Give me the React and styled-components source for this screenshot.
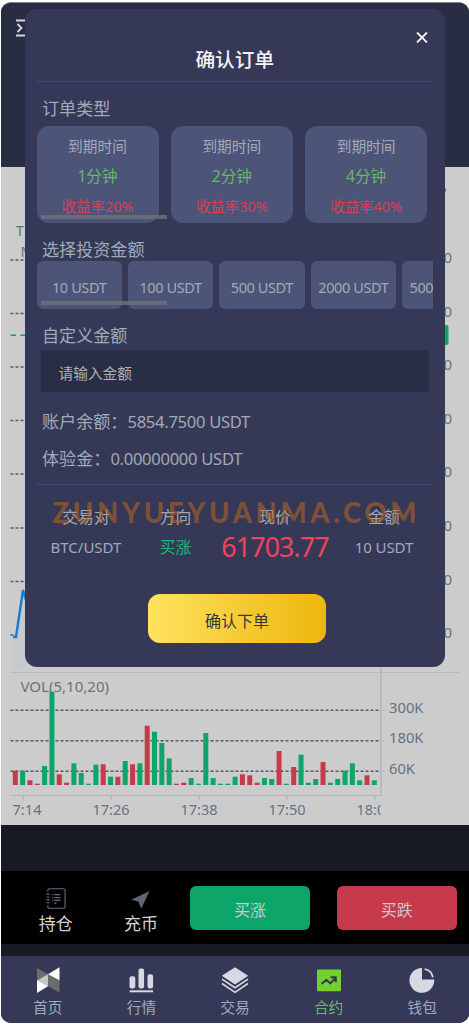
import React from 'react';
import styled, { createGlobalStyle } from 'styled-components';

const GlobalStyle = createGlobalStyle`
  *, *::before, *::after { box-sizing: border-box; }
  body {
    margin: 0;
    background: #fff;
    font-family: "Noto Sans", "Noto Sans CJK SC", sans-serif;
    font-weight: 400;
    -webkit-font-smoothing: antialiased;
  }
`;

const Page = styled.div`
  width: 469px;
  height: 1024px;
  padding: 2px 0 1px 1px;
  background: #fff;
  overflow: hidden;
`;

const Screen = styled.main`
  position: relative;
  display: flex;
  flex-direction: column;
  height: 1021px;
  border-radius: 10px;
  border-top: 1px solid #7d808d;
  overflow: hidden;
  background: #171923;
`;

const TopBar = styled.header`
  height: 164px;
  flex: none;
  padding: 15px 0 0 15px;
  background: #292d43;
`;

const ChartSvg = styled.svg`
  display: block;
  flex: none;
  background: #ccc;
  font-size: 15px;
  fill: #697180;
`;

const ActionBar = styled.section`
  display: flex;
  align-items: center;
  flex: none;
  height: 73px;
  margin-top: 46px;
  padding: 0 12px 0 12px;
  background: #000;
`;

const Shortcut = styled.div`
  display: flex;
  flex-direction: column;
  align-items: center;
  width: 85.5px;
  height: 56px;
  padding-top: 7px;
  color: #d2d4d8;
  font-size: 17px;
  line-height: 25px;
  & > svg { display: block; margin-bottom: 1px; }
`;

const TradeButton = styled.button`
  width: 120.5px;
  height: 44px;
  margin-left: ${(p) => p.$gap}px;
  padding: 4px 0 0;
  border: 0;
  border-radius: 6px;
  background: ${(p) => p.$color};
  color: #c9cbd0;
  font: inherit;
  font-size: 16px;
  line-height: 40px;
`;

const TabBar = styled.nav`
  display: grid;
  grid-template-columns: repeat(5, 1fr);
  flex: none;
  height: 67px;
  margin-top: 12px;
  background: #353957;
`;

const Tab = styled.div`
  display: flex;
  flex-direction: column;
  align-items: center;
  padding-top: 10px;
  color: ${(p) => (p.$active ? '#68b868' : '#a2aabc')};
  font-size: 14.7px;
  line-height: 24px;
  & > svg { display: block; margin-bottom: 1px; }
`;

const Dialog = styled.section`
  position: absolute;
  top: 6px;
  left: 23.5px;
  width: 420.5px;
  height: 658px;
  padding: 15px 12px 0;
  border-radius: 12px;
  background: #353957;
  color: #a2aab8;
`;

const CloseRow = styled.div`
  display: flex;
  justify-content: flex-end;
  height: 24px;
  padding: 8px 5px 0 0;
`;

const Title = styled.h1`
  margin: 0;
  height: 33.5px;
  padding-top: 1px;
  border-bottom: 1px solid #434a70;
  color: #f2f3f5;
  font-size: 19.7px;
  font-weight: 500;
  line-height: 22px;
  text-align: center;
`;

const SectionLabel = styled.h2`
  margin: ${(p) => p.$top}px 0 0 5.5px;
  font-size: 17.1px;
  font-weight: inherit;
  line-height: 26px;
  height: ${(p) => p.$height}px;
`;

const Scroller = styled.div`
  position: relative;
  display: flex;
  gap: ${(p) => p.$gap}px;
  overflow: hidden;
  &::after {
    content: '';
    position: absolute;
    left: 4.5px;
    bottom: 4.5px;
    width: 126px;
    height: 4px;
    background: rgba(113, 112, 118, 0.8);
  }
`;

const TermCard = styled.div`
  flex: none;
  width: 122px;
  height: 97.5px;
  padding-top: 5px;
  border-radius: 12px;
  background: #4c5478;
  font-size: 14.7px;
  line-height: 30.4px;
  text-align: center;
`;

const TermLength = styled.div`
  color: #68b868;
  font-size: 15.6px;
`;

const TermRate = styled.div`
  color: #da3f58;
  letter-spacing: -0.2px;
`;

const AmountChip = styled.div`
  flex: none;
  width: 85.3px;
  height: 48.5px;
  padding-left: ${(p) => p.$pad || 0}px;
  border-radius: 6px;
  background: #4c5478;
  font-size: 14.5px;
  line-height: 53px;
  letter-spacing: -0.4px;
  text-align: ${(p) => (p.$pad ? 'left' : 'center')};
  white-space: nowrap;
`;

const AmountInput = styled.input`
  display: block;
  width: 388.5px;
  height: 42px;
  margin: 3px 0 10.5px 4px;
  padding: 5px 18px 0;
  border: 0;
  background: #292d45;
  font: inherit;
  font-size: 14.7px;
  &::placeholder { color: #b2b2af; opacity: 1; }
`;

const Balance = styled.p`
  margin: 0 0 0 5.5px;
  height: 37px;
  font-size: 16.6px;
  line-height: 39px;
  letter-spacing: -0.3px;
  white-space: nowrap;
`;

const BalanceLabel = styled.span`
  font-size: 17.1px;
  letter-spacing: 0;
`;

const Summary = styled.div`
  position: relative;
  display: grid;
  grid-template-columns: 99px 80px 119px 99px;
  grid-template-rows: 30px 30px;
  margin-top: 8px;
  padding-top: 17px;
  border-top: 1px solid #434a70;
  text-align: center;
  font-size: 15.8px;
  line-height: 30px;
`;

const Cell = styled.span`
  white-space: nowrap;
  color: ${(p) => p.$color || 'inherit'};
  font-size: ${(p) => p.$size || 15.8}px;
  letter-spacing: ${(p) => p.$spacing || 0}px;
`;

const Watermark = styled.span`
  position: absolute;
  top: 10px;
  left: 16px;
  color: rgba(199, 104, 22, 0.5);
  font-family: Lato, sans-serif;
  font-size: 27.5px;
  font-weight: 900;
  line-height: 36px;
  letter-spacing: 3.65px;
  white-space: nowrap;
`;

const ConfirmButton = styled.button`
  display: block;
  width: 178px;
  height: 49px;
  margin: 31.5px 0 0 111.5px;
  padding: 3px 0 0;
  border: 0;
  border-radius: 12px;
  background: linear-gradient(90deg, #fee35e, #edb60c);
  color: #343743;
  font: inherit;
  font-size: 16px;
`;

const UP = '#0da56a';
const DOWN = '#c73a4b';

const volumes = [
  [0, 14.3], [1, 14.3], [0, 4.7], [0, 1.3], [1, 19], [1, 93.3], [0, 10.7], [0, 2.3], [1, 21.7], [1, 12],
  [1, 1.3], [1, 20.3], [0, 20.7], [1, 8.3], [0, 8.3], [1, 24], [0, 20.7], [1, 21.7], [0, 59.3], [1, 53.3],
  [1, 42], [1, 26.7], [0, 1.3], [0, 2.3], [1, 7], [1, 1.3], [1, 52], [1, 7], [1, 1.3], [1, 1.3],
  [1, 8.3], [0, 10.7], [0, 9.7], [0, 2.3], [1, 7], [1, 6], [0, 34], [1, 1.3], [0, 18], [1, 30.3],
  [1, 2.3], [1, 6], [0, 23], [1, 2.3], [1, 6], [1, 14.3], [1, 21.7], [1, 4.7], [0, 9.7], [1, 4.7],
];

const priceLines = [260, 313.5, 367, 420.5, 474, 528, 581.5, 635];
const volumeLines = [[710.3, '300K', 34.5], [740.7, '180K', 34.5], [771.3, '60K', 26]];
const times = [[23.3, 12.5, '7:14', 29], [111.3, 92.5, '17:26', 37], [199.3, 180.5, '17:38', 37], [287, 268.5, '17:50', 37], [375, 356.5, '18:02', 37]];

function Chart() {
  return (
    <ChartSvg width="468" height="658" viewBox="1 167 468 658">
      <defs>
        <clipPath id="plot"><rect x="1" y="167" width="379.5" height="658" /></clipPath>
      </defs>
      <text x="15.8" y="235.5">Time</text>
      <text x="20.5" y="257">MA</text>
      <circle cx="443.5" cy="190" r="2.5" fill="#2181c9" />
      {priceLines.map((y) => (
        <g key={y}>
          <path d={`M10.5 ${y}H381`} stroke="#595a60" strokeWidth="1.4" strokeDasharray="3 2" />
          <text x="452" y={y + 3} textAnchor="end">61700</text>
        </g>
      ))}
      <path d="M10.5 335.3H440" stroke={UP} strokeWidth="1.4" strokeDasharray="5.5 4.3" />
      <rect x="385" y="325" width="63.5" height="20" rx="2" fill={UP} />
      <path d="M13 637H16L23 590L27 604V670H13Z" fill="#c6cacd" />
      <path d="M13 637H16L23 590L27 604" fill="none" stroke="#1a7cc8" strokeWidth="2.4" />
      <path d="M10.5 672.5H459" stroke="#b9b9bb" />
      <path d="M381 660V795" stroke="#b9b9bb" strokeWidth="1.8" />
      <path d="M10.5 795.5H381" stroke="#b5b5b8" strokeWidth="1.2" />
      <text x="20.5" y="691.5" textLength="88.5" lengthAdjust="spacingAndGlyphs">VOL(5,10,20)</text>
      {volumeLines.map(([y, label, w]) => (
        <g key={label}>
          <path d={`M10.5 ${y}H380`} stroke="#595a60" strokeWidth="1.5" strokeDasharray="3 2" />
          <path d={`M381 ${y}H385`} stroke="#b9b9bb" />
          <text x="389" y={y + 2.7} textLength={w} lengthAdjust="spacingAndGlyphs">{label}</text>
        </g>
      ))}
      {volumes.map(([up, h], i) => (
        <rect key={i} x={12.8 + i * 7.327} y={785 - h} width="5" height={h} fill={up ? UP : DOWN} />
      ))}
      <g clipPath="url(#plot)">
        {times.map(([tick, x, label, w]) => (
          <g key={label}>
            <path d={`M${tick} 795V799.5`} stroke="#b5b5b8" strokeWidth="1.4" />
            <text x={x} y="814.6" textLength={w} lengthAdjust="spacingAndGlyphs">{label}</text>
          </g>
        ))}
      </g>
    </ChartSvg>
  );
}

const MenuSvg = styled.svg`
  display: block;
`;

const MenuIcon = () => (
  <MenuSvg width="20" height="20" viewBox="0 0 20 20" fill="none" stroke="#d5d6da" strokeWidth="1.8">
    <path d="M0 2.5H18M0 17.5H18M1.5 6L5.5 10L1.5 14M12 10H18" />
  </MenuSvg>
);

const NotebookIcon = () => (
  <svg width="22" height="24" viewBox="0 0 22 24" fill="none" stroke="#646b7b" strokeWidth="1.2">
    <path d="M2.5 5V3.4C2.5 2.3 3.2 1.8 4.2 1.8H19C20 1.8 20.5 2.3 20.5 3.2V20.8C20.5 21.7 20 22.2 19 22.2H4.2C3.2 22.2 2.5 21.7 2.5 20.6V19" />
    <path d="M1 7.4H4.2M1 10.4H4.2M1 13.4H4.2M1 16.4H4.2" />
    <path d="M7 8H8.2M9.2 8H15.5M7 11H8.2M9.2 11H15.5M7 14H8.2M9.2 14H15.5M9.2 16.8H11.5" strokeWidth="1.3" />
  </svg>
);

const SendIcon = () => (
  <svg width="22" height="24" viewBox="0 0 22 24">
    <path d="M20 4.2L0.8 13.2L8.3 15L11.2 22.8Z" fill="#5e6573" />
  </svg>
);

const HomeIcon = () => (
  <svg width="28" height="28" viewBox="0 0 28 28">
    <path d="M3 2L14 8.2V14L3 15Z" fill="#6d6d6d" />
    <path d="M14 8.2L25.5 14V26.7L14 20Z" fill="#6d6d6d" />
    <path d="M14 8.2L25.5 1.2V14.2Z" fill="#fff" />
    <path d="M3 14.4L14 8.2V20.2L3 17Z" fill="#c5c5c5" />
    <path d="M3 14.4L14 20.2L3 26.9Z" fill="#fff" />
  </svg>
);

const MarketIcon = () => (
  <svg width="28" height="28" viewBox="0 0 28 28" fill="#d6d8e2">
    <rect x="2.5" y="10.2" width="5.8" height="12.2" rx="2.2" />
    <rect x="11.5" y="2.5" width="5.6" height="19.9" rx="2.2" />
    <rect x="20.5" y="8.2" width="5.6" height="14.2" rx="2.2" />
    <rect x="2.7" y="24.3" width="23.3" height="2" />
  </svg>
);

const LayersIcon = () => (
  <svg width="28" height="28" viewBox="0 0 28 28">
    <path d="M14 1.2L27.2 9.7L14 18.4L.8 9.7Z" fill="#d6d8e2" />
    <path d="M1 13.2L14 21.7L27 13.2M1 17.5L14 26.4L27 17.5" fill="none" stroke="#d6d8e2" strokeWidth="1.6" />
  </svg>
);

const ContractIcon = () => (
  <svg width="28" height="28" viewBox="0 0 28 28">
    <rect x="2" y="3.5" width="24" height="21.8" rx="1.2" fill="#74d02c" />
    <path d="M6.5 18L11.3 13.8L15.4 17.4L20.5 12M15.5 11.2H20.8V16.3" fill="none" stroke="#353957" strokeWidth="2" />
  </svg>
);

const WalletIcon = () => (
  <svg width="28" height="28" viewBox="0 0 28 28">
    <path d="M14 2V13.6H26.2A12.4 12.4 0 1 1 14 2Z" fill="#d6d8e2" />
    <path d="M16.6 3.2C20.7 3.7 24 7 24.9 11.2" fill="none" stroke="#d6d8e2" strokeWidth="1.8" />
  </svg>
);

const terms = [['1分钟', '20%'], ['2分钟', '30%'], ['4分钟', '40%']];
const tabs = [['首页', HomeIcon], ['行情', MarketIcon], ['交易', LayersIcon], ['合约', ContractIcon], ['钱包', WalletIcon]];

function OrderDialog() {
  return (
    <Dialog>
      <CloseRow>
        <svg width="12" height="11" viewBox="0 0 12 11" stroke="#f5f5f7" strokeWidth="1.8"><path d="M1 .5L11 10.5M11 .5L1 10.5" /></svg>
      </CloseRow>
      <Title>确认订单</Title>
      <SectionLabel $top={14} $height={30}>订单类型</SectionLabel>
      <Scroller $gap={12.3}>
        {terms.map(([length, rate]) => (
          <TermCard key={length}>
            <div>到期时间</div>
            <TermLength>{length}</TermLength>
            <TermRate>收益率{rate}</TermRate>
          </TermCard>
        ))}
      </Scroller>
      <SectionLabel $top={13.5} $height={24}>选择投资金额</SectionLabel>
      <Scroller $gap={6.1}>
        <AmountChip>10 USDT</AmountChip>
        <AmountChip>100 USDT</AmountChip>
        <AmountChip>500 USDT</AmountChip>
        <AmountChip>2000 USDT</AmountChip>
        <AmountChip $pad={7.5}>5000 USDT</AmountChip>
      </Scroller>
      <SectionLabel $top={13.5} $height={24}>自定义金额</SectionLabel>
      <AmountInput placeholder="请输入金额" />
      <Balance><BalanceLabel>账户余额：</BalanceLabel>5854.7500 USDT</Balance>
      <Balance><BalanceLabel>体验金：</BalanceLabel>0.00000000 USDT</Balance>
      <Summary>
        <Cell>交易对</Cell>
        <Cell>方向</Cell>
        <Cell>现价</Cell>
        <Cell>金额</Cell>
        <Cell $size={15}>BTC/USDT</Cell>
        <Cell $color="#19b87b">买涨</Cell>
        <Cell $color="#f0435b" $size={26.8} $spacing={-0.9}>61703.77</Cell>
        <Cell $size={15} $spacing={-0.1}>10 USDT</Cell>
        <Watermark>ZUNYUEYUANMA.COM</Watermark>
      </Summary>
      <ConfirmButton>确认下单</ConfirmButton>
    </Dialog>
  );
}

export default function App() {
  return (
    <Page>
      <GlobalStyle />
      <Screen>
        <TopBar><MenuIcon /></TopBar>
        <Chart />
        <ActionBar>
          <Shortcut><NotebookIcon />持仓</Shortcut>
          <Shortcut><SendIcon />充币</Shortcut>
          <TradeButton $gap={6} $color={UP}>买涨</TradeButton>
          <TradeButton $gap={26.5} $color={DOWN}>买跌</TradeButton>
        </ActionBar>
        <TabBar>
          {tabs.map(([label, Icon]) => (
            <Tab key={label} $active={label === '合约'}><Icon />{label}</Tab>
          ))}
        </TabBar>
        <OrderDialog />
      </Screen>
    </Page>
  );
}
